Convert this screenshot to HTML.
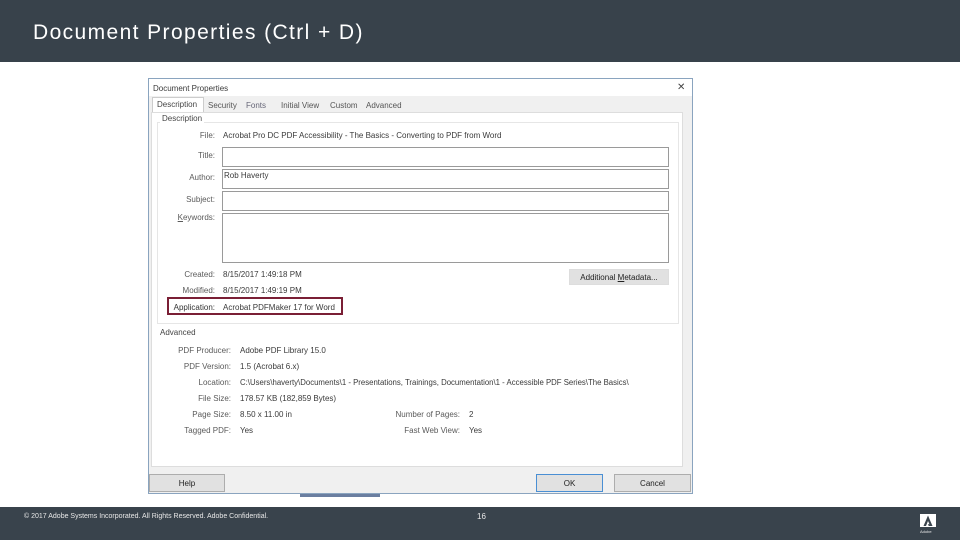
<!DOCTYPE html>
<html><head><meta charset="utf-8"><style>
*{margin:0;padding:0;box-sizing:border-box}
body{width:960px;height:540px;overflow:hidden;background:#fff;font-family:"Liberation Sans",sans-serif;position:relative}
.a{position:absolute}
.hdr{left:0;top:0;width:960px;height:62px;background:#38424b}
.hdr span{position:absolute;left:33px;top:21px;color:#fff;font-size:21px;letter-spacing:1.4px}
.ftr{left:0;top:507px;width:960px;height:33px;background:#39434c;color:#e8e8e8;font-size:7px}
.dlg{left:148px;top:78px;width:545px;height:416px;border:1px solid #8aa4bf;background:#f0f0f0}
.t{font-size:8px;color:#3a3a3a;white-space:nowrap}
.lbl{font-size:8px;color:#5a5a5a;white-space:nowrap;text-align:right}
.box{background:#fff;border:1px solid #9a9a9a}
.btn{background:#e1e1e1;border:1px solid #adadad;font-size:8px;color:#222;text-align:center}
</style></head><body>
<div class="a hdr"><span>Document Properties (Ctrl + D)</span></div>

<div class="a dlg"></div>
<div class="a" style="left:149px;top:79px;width:543px;height:17px;background:#fff"></div>
<div class="a t" style="left:153px;top:84px">Document Properties</div>
<div class="a t" style="left:677px;top:82px;font-size:10px;color:#444">✕</div>
<div class="a" style="left:152px;top:97px;width:52px;height:16px;background:#fff;border:1px solid #ccc;border-bottom:none"></div>
<div class="a t" style="left:157px;top:100px;color:#444">Description</div>
<div class="a t" style="left:208px;top:101px;color:#555">Security</div>
<div class="a t" style="left:246px;top:101px;color:#667">Fonts</div>
<div class="a t" style="left:281px;top:101px;color:#555">Initial View</div>
<div class="a t" style="left:330px;top:101px;color:#555">Custom</div>
<div class="a t" style="left:366px;top:101px;color:#555">Advanced</div>
<div class="a" style="left:151px;top:112px;width:532px;height:355px;background:#fff;border:1px solid #ddd"></div>
<div class="a" style="left:157px;top:122px;width:522px;height:202px;border:1px solid #e6e6e6"></div>
<div class="a t" style="left:160px;top:114px;background:#fff;padding:0 2px;color:#444">Description</div>
<div class="a lbl" style="left:160px;top:131px;width:55px">File:</div>
<div class="a t" style="left:223px;top:131px">Acrobat Pro DC PDF Accessibility - The Basics - Converting to PDF from Word</div>
<div class="a lbl" style="left:160px;top:151px;width:55px">Title:</div>
<div class="a box" style="left:222px;top:147px;width:447px;height:20px"></div>
<div class="a lbl" style="left:160px;top:173px;width:55px">Author:</div>
<div class="a box" style="left:222px;top:169px;width:447px;height:20px"></div>
<div class="a t" style="left:224px;top:171px">Rob Haverty</div>
<div class="a lbl" style="left:160px;top:195px;width:55px">Subject:</div>
<div class="a box" style="left:222px;top:191px;width:447px;height:20px"></div>
<div class="a lbl" style="left:160px;top:213px;width:55px"><u>K</u>eywords:</div>
<div class="a box" style="left:222px;top:213px;width:447px;height:50px"></div>
<div class="a lbl" style="left:160px;top:270px;width:55px">Created:</div>
<div class="a t" style="left:223px;top:270px">8/15/2017 1:49:18 PM</div>
<div class="a lbl" style="left:160px;top:286px;width:55px">Modified:</div>
<div class="a t" style="left:223px;top:286px">8/15/2017 1:49:19 PM</div>
<div class="a btn" style="left:569px;top:269px;width:100px;height:16px;line-height:15px;border-color:#ddd">Additional <u>M</u>etadata...</div>
<div class="a" style="left:167px;top:297px;width:176px;height:18px;border:2px solid #7a1f35"></div>
<div class="a lbl" style="left:160px;top:303px;width:55px;color:#333">Application:</div>
<div class="a t" style="left:223px;top:303px">Acrobat PDFMaker 17 for Word</div>

<div class="a t" style="left:160px;top:328px;color:#444">Advanced</div>
<div class="a lbl" style="left:160px;top:346px;width:71px">PDF Producer:</div>
<div class="a t" style="left:240px;top:346px">Adobe PDF Library 15.0</div>
<div class="a lbl" style="left:160px;top:362px;width:71px">PDF Version:</div>
<div class="a t" style="left:240px;top:362px">1.5 (Acrobat 6.x)</div>
<div class="a lbl" style="left:160px;top:378px;width:71px">Location:</div>
<div class="a t" style="left:240px;top:378px;font-size:7.8px">C:\Users\haverty\Documents\1 - Presentations, Trainings, Documentation\1 - Accessible PDF Series\The Basics\</div>
<div class="a lbl" style="left:160px;top:394px;width:71px">File Size:</div>
<div class="a t" style="left:240px;top:394px">178.57 KB (182,859 Bytes)</div>
<div class="a lbl" style="left:160px;top:410px;width:71px">Page Size:</div>
<div class="a t" style="left:240px;top:410px">8.50 x 11.00 in</div>
<div class="a lbl" style="left:380px;top:410px;width:80px">Number of Pages:</div>
<div class="a t" style="left:469px;top:410px">2</div>
<div class="a lbl" style="left:160px;top:426px;width:71px">Tagged PDF:</div>
<div class="a t" style="left:240px;top:426px">Yes</div>
<div class="a lbl" style="left:380px;top:426px;width:80px">Fast Web View:</div>
<div class="a t" style="left:469px;top:426px">Yes</div>
<div class="a btn" style="left:149px;top:474px;width:76px;height:18px;line-height:17px">Help</div>
<div class="a btn" style="left:536px;top:474px;width:67px;height:18px;line-height:17px;border-color:#4a8fd4">OK</div>
<div class="a btn" style="left:614px;top:474px;width:77px;height:18px;line-height:17px">Cancel</div>
<div class="a" style="left:300px;top:494px;width:80px;height:3px;background:#6a7ea0"></div>

<div class="a ftr">
<span class="a" style="left:24px;top:6px">© 2017 Adobe Systems Incorporated.  All Rights Reserved.  Adobe Confidential.</span>
<span class="a" style="left:477px;top:5px;font-size:8px">16</span>
<div class="a" style="left:920px;top:7px;width:16px;height:13px;background:#fff"></div>
<svg class="a" style="left:920px;top:7px" width="16" height="13" viewBox="0 0 16 13"><path d="M8 1.5L3.5 12h2.5L8 7l1.5 3.2H7.8l1 1.8H12.5Z" fill="#39434c"/></svg>
<span class="a" style="left:920px;top:22px;font-size:4px">Adobe</span>
</div>
</body></html>
